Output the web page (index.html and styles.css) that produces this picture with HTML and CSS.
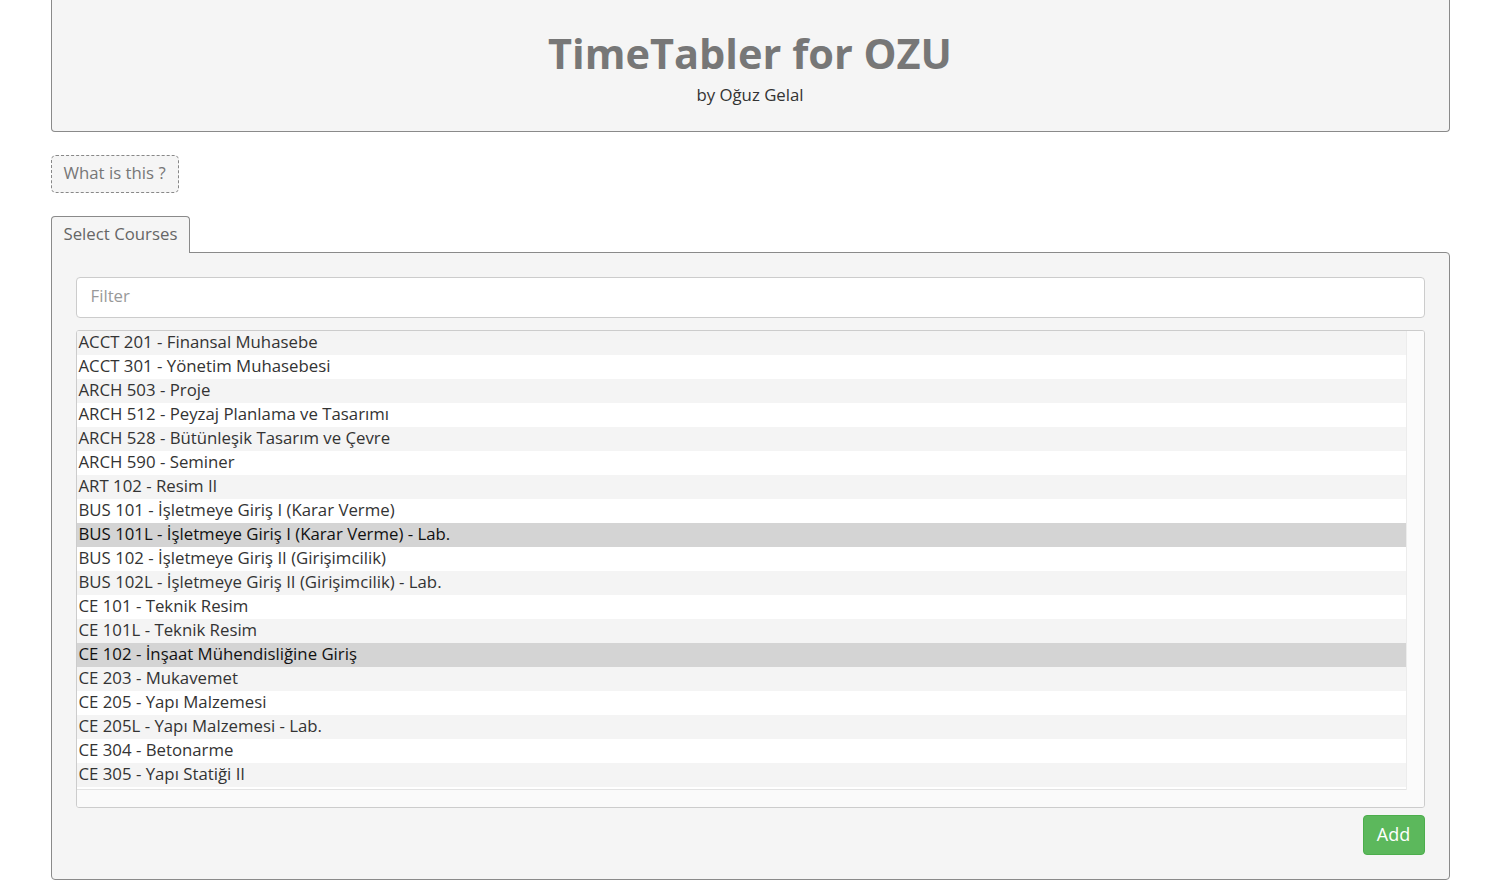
FILE: index.html
```html
<!DOCTYPE html>
<html lang="tr">
<head>
<meta charset="utf-8">
<title>TimeTabler for OZU</title>
<link rel="stylesheet" href="styles.css">
</head>
<body>
<div class="container">
  <header class="jumbo">
    <h1 class="title">TimeTabler for OZU</h1>
    <p class="author">by Oğuz Gelal</p>
  </header>

  <button class="help-btn" type="button">What is this ?</button>

  <div class="tabs">
    <div class="tab active">Select Courses</div>
  </div>
  <section class="panel">
    <div class="filter">Filter</div>
    <div class="listbox">
      <div class="list-scroll">
        <div class="row">ACCT 201 - Finansal Muhasebe</div>
        <div class="row">ACCT 301 - Yönetim Muhasebesi</div>
        <div class="row">ARCH 503 - Proje</div>
        <div class="row">ARCH 512 - Peyzaj Planlama ve Tasarımı</div>
        <div class="row">ARCH 528 - Bütünleşik Tasarım ve Çevre</div>
        <div class="row">ARCH 590 - Seminer</div>
        <div class="row">ART 102 - Resim II</div>
        <div class="row">BUS 101 - İşletmeye Giriş I (Karar Verme)</div>
        <div class="row selected">BUS 101L - İşletmeye Giriş I (Karar Verme) - Lab.</div>
        <div class="row">BUS 102 - İşletmeye Giriş II (Girişimcilik)</div>
        <div class="row">BUS 102L - İşletmeye Giriş II (Girişimcilik) - Lab.</div>
        <div class="row">CE 101 - Teknik Resim</div>
        <div class="row">CE 101L - Teknik Resim</div>
        <div class="row selected">CE 102 - İnşaat Mühendisliğine Giriş</div>
        <div class="row">CE 203 - Mukavemet</div>
        <div class="row">CE 205 - Yapı Malzemesi</div>
        <div class="row">CE 205L - Yapı Malzemesi - Lab.</div>
        <div class="row">CE 304 - Betonarme</div>
        <div class="row">CE 305 - Yapı Statiği II</div>
      </div>
      <div class="vtrack"></div>
      <div class="htrack"></div>
      <div class="corner"></div>
    </div>
    <div class="actions">
      <button class="add-btn" type="button">Add</button>
    </div>
  </section>
</div>
</body>
</html>
```

FILE: styles.css
```css
* { box-sizing: border-box; }

html, body {
  margin: 0;
  padding: 0;
  background: #ffffff;
  font-family: "Open Sans", "Noto Sans", sans-serif;
  color: #333333;
}

.container {
  width: 1399px;
  margin: 0 auto;
}

.jumbo {
  background: #f5f5f5;
  border: 1px solid #8a8a8a;
  border-top: none;
  border-radius: 0 0 4px 4px;
  height: 132px;
  text-align: center;
  padding-top: 28px;
}

.title {
  margin: 0;
  font-size: 41.5px;
  font-weight: 700;
  line-height: 50px;
  color: #777777;
}

.author {
  margin: 6px 0 0;
  font-size: 16.8px;
  line-height: 22px;
  color: #333333;
}

.help-btn {
  display: block;
  margin-top: 23px;
  height: 38px;
  padding: 0 12px 3px;
  background: #f5f5f5;
  border: 1px dashed #888888;
  border-radius: 5px;
  font-family: inherit;
  font-size: 16.8px;
  color: #777777;
}

.tabs {
  display: flex;
  margin-top: 23px;
}

.tab {
  height: 37px;
  padding: 5px 12px 0;
  background: #f5f5f5;
  border: 1px solid #8a8a8a;
  border-bottom: none;
  border-radius: 4px 4px 0 0;
  font-size: 16.8px;
  color: #666666;
  position: relative;
  margin-bottom: -1px;
  z-index: 1;
}

.panel {
  background: #f5f5f5;
  border: 1px solid #8a8a8a;
  border-radius: 0 4px 4px 4px;
  height: 628px;
  padding: 24px 24px 0;
}

.filter {
  height: 41px;
  background: #ffffff;
  border: 1px solid #cccccc;
  border-radius: 4px;
  padding: 6px 14px;
  font-size: 16.8px;
  line-height: 23px;
  color: #999999;
}

.listbox {
  margin-top: 12px;
  height: 478px;
  background: #fafafa;
  border: 1px solid #cccccc;
  border-radius: 3px;
  display: grid;
  grid-template-columns: 1fr 18px;
  grid-template-rows: 459px 1fr;
  overflow: hidden;
}

.list-scroll {
  overflow: hidden;
  background: #ffffff;
  border-bottom: 1px solid #e3e3e3;
}

.row {
  height: 24px;
  padding: 0 0 2px 2px;
  font-size: 16.8px;
  line-height: 22px;
  color: #333333;
  white-space: nowrap;
  background: #ffffff;
}

.row:nth-child(odd) { background: #f4f4f4; }
.row.selected { background: #d4d4d4; color: #111111; }

.vtrack {
  background: #fbfbfb;
  border-left: 1px solid #ececec;
}

.htrack { background: #fafafa; }
.corner { background: #fafafa; }

.actions {
  display: flex;
  justify-content: flex-end;
  margin-top: 7px;
}

.add-btn {
  height: 40px;
  width: 62px;
  padding: 0 0 2px;
  background: #5cb85c;
  border: 1px solid #4cae4c;
  border-radius: 4px;
  color: #ffffff;
  font-family: inherit;
  font-size: 18px;
}
```
